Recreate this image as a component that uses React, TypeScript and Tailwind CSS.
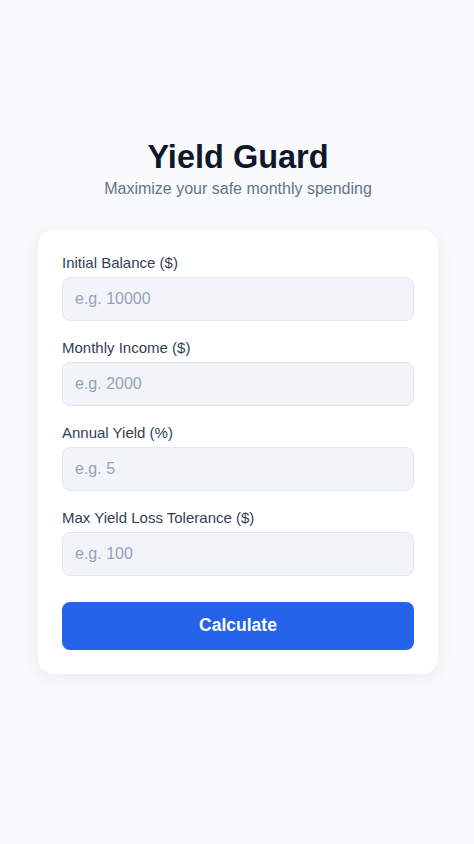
import React from "react";

const fields = [
  { label: "Initial Balance ($)", placeholder: "e.g. 10000" },
  { label: "Monthly Income ($)", placeholder: "e.g. 2000" },
  { label: "Annual Yield (%)", placeholder: "e.g. 5" },
  { label: "Max Yield Loss Tolerance ($)", placeholder: "e.g. 100" },
];

export default function App() {
  return (
    <div
      className="min-h-screen bg-[#f8fafc] flex flex-col items-center pt-[137px] pl-[2px]"
      style={{ fontFamily: '"Liberation Sans", Arial, sans-serif' }}
    >
      <h1 className="text-[32.5px] leading-[40px] font-bold text-[#0f172a]">
        Yield Guard
      </h1>
      <p className="text-[16px] leading-[24px] text-[#64748b]">
        Maximize your safe monthly spending
      </p>
      <div className="mt-[29px] w-[400px] bg-white rounded-2xl p-6 shadow-[0_4px_20px_rgba(15,23,42,0.06)]">
        {fields.map((f) => (
          <div key={f.label} className="mb-[18px]">
            <label className="block text-[15px] leading-[18px] text-[#334155] mb-[5px]">
              {f.label}
            </label>
            <input
              type="text"
              placeholder={f.placeholder}
              className="block w-full h-[44px] px-3 rounded-lg bg-[#f1f5f9] border border-[#e2e8f0] text-[16px] text-[#0f172a] placeholder:text-[#94a3b8] outline-none"
            />
          </div>
        ))}
        <button className="mt-2 w-full h-[48px] rounded-lg bg-[#2563eb] text-white font-bold text-[17.5px] leading-[44px] pb-[2px]">
          Calculate
        </button>
      </div>
    </div>
  );
}
